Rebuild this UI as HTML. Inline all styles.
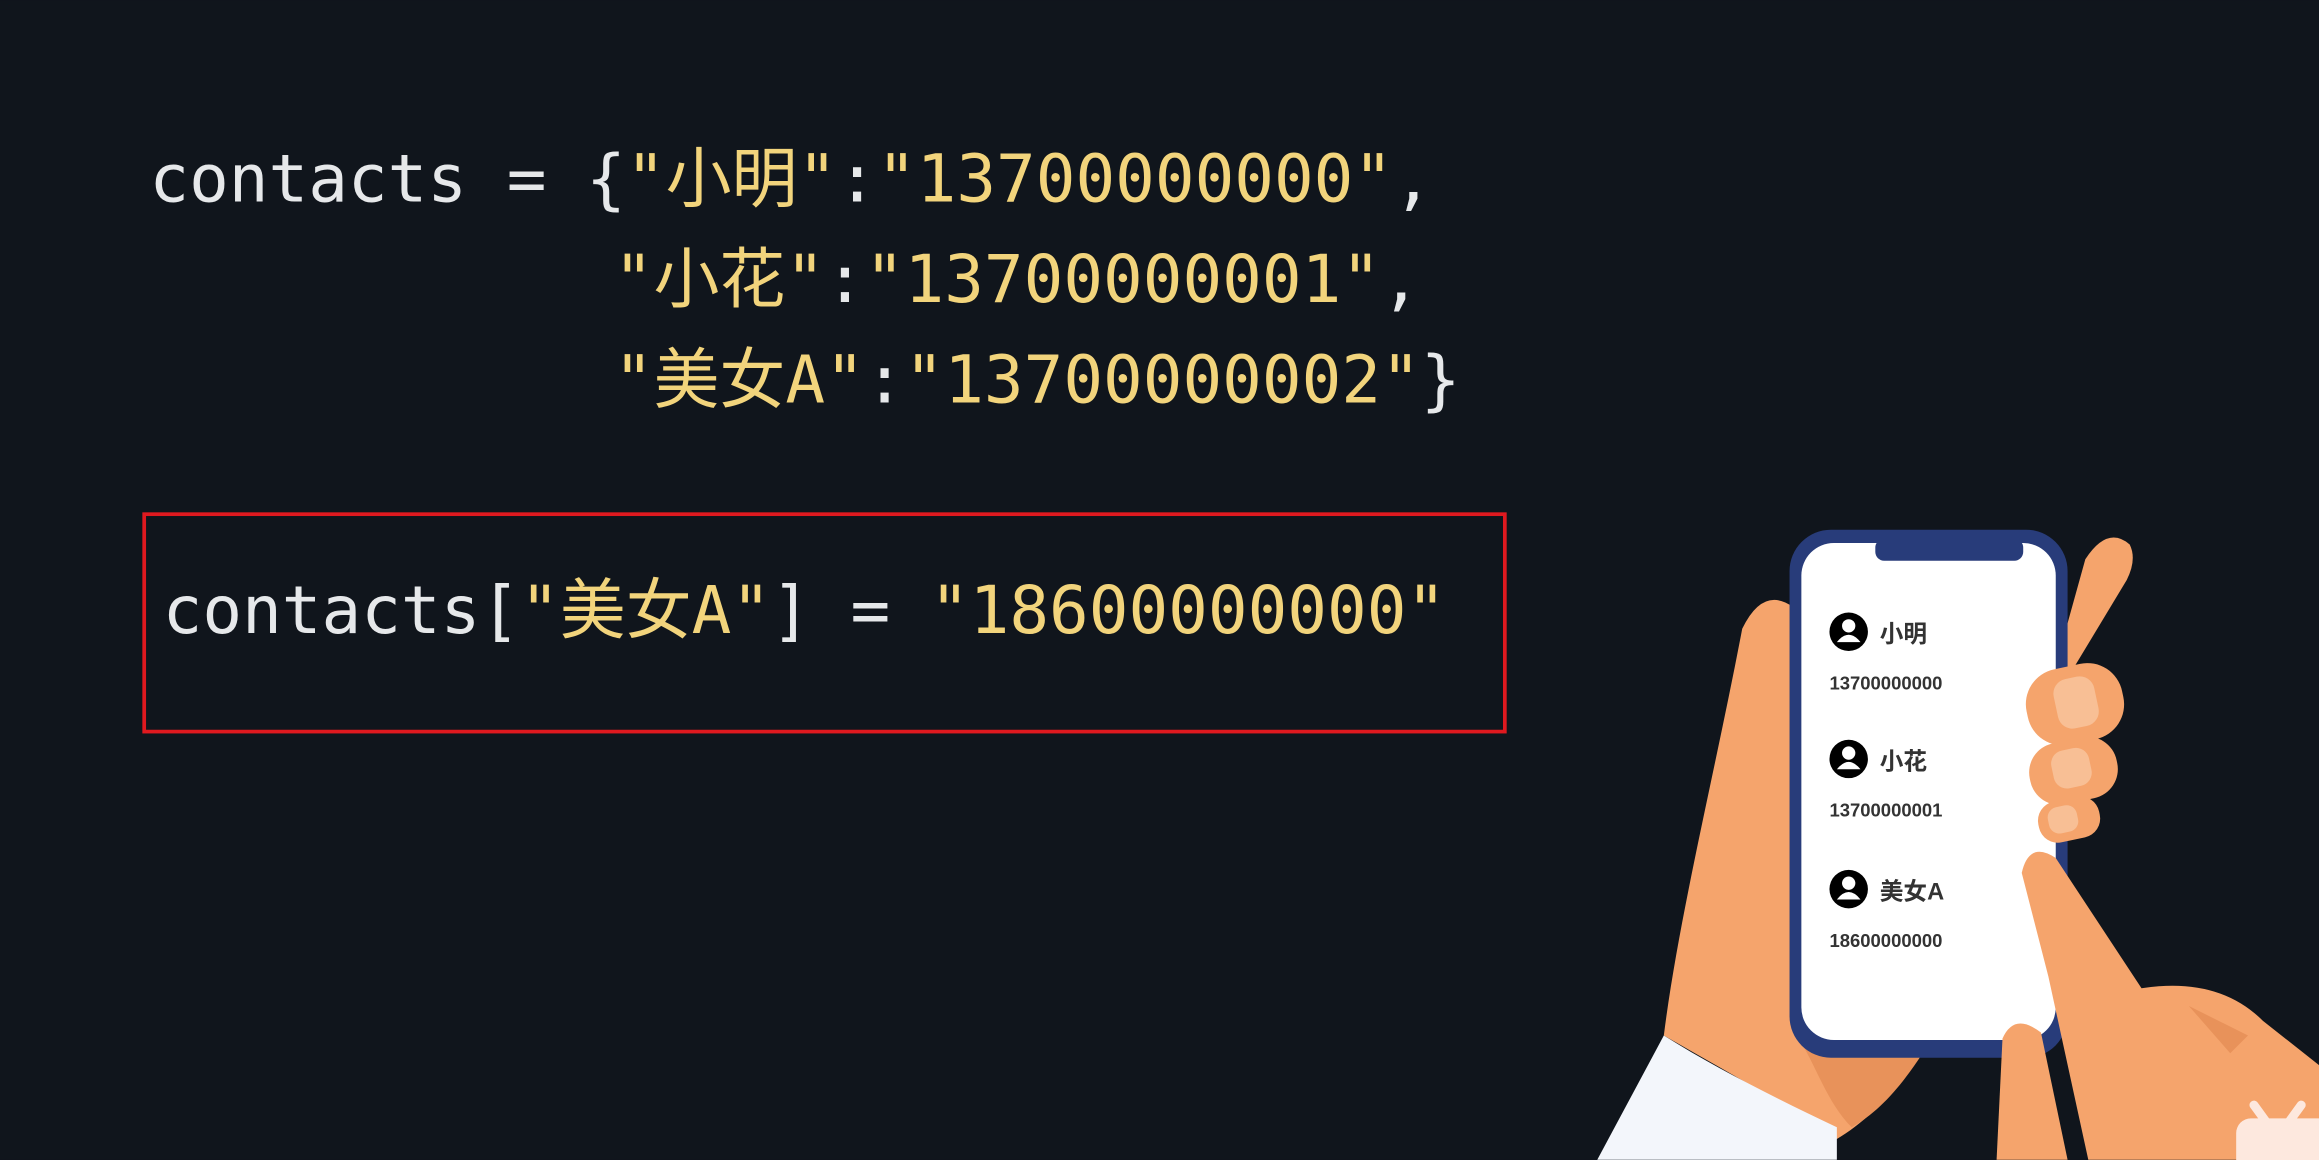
<!DOCTYPE html>
<html><head><meta charset="utf-8"><style>
html,body{margin:0;padding:0;background:#10151c;overflow:hidden}
svg{display:block}
.c{font-family:"DejaVu Sans Mono","Noto Sans CJK SC",monospace;font-size:44.6px}
.w{fill:#e6e8ea}.y{fill:#f2d47c}
.p{font-family:"Liberation Sans","Noto Sans CJK SC",sans-serif;font-weight:bold;fill:#333}
</style></head><body>
<svg width="2319" height="1160" viewBox="0 0 1568 784" xmlns="http://www.w3.org/2000/svg">
<rect width="1568" height="784" fill="#10151c"/>
<text class="c" x="101" y="136" xml:space="preserve"><tspan class="w">contacts = {</tspan><tspan class="y">"小明"</tspan><tspan class="w">:</tspan><tspan class="y">"13700000000"</tspan><tspan class="w">,</tspan></text>
<text class="c" x="415" y="204" xml:space="preserve"><tspan class="y">"小花"</tspan><tspan class="w">:</tspan><tspan class="y">"13700000001"</tspan><tspan class="w">,</tspan></text>
<text class="c" x="415" y="272" xml:space="preserve"><tspan class="y">"美女A"</tspan><tspan class="w">:</tspan><tspan class="y">"13700000002"</tspan><tspan class="w">}</tspan></text>
<rect x="97.5" y="347.5" width="920" height="147" fill="none" stroke="#e0191f" stroke-width="2.5"/>
<text class="c" x="110" y="428" xml:space="preserve"><tspan class="w">contacts[</tspan><tspan class="y">"美女A"</tspan><tspan class="w">] = </tspan><tspan class="y">"18600000000"</tspan></text>

<!-- left hand -->
<path d="M1125,700 C1135,620 1160,520 1178,425 Q1192,396 1212,410 L1215,700 L1300,712 C1280,740 1262,758 1242,770 C1200,742 1160,720 1125,700Z" fill="#f5a46c"/>
<path d="M1215,700 L1300,712 C1285,735 1270,752 1252,762 C1235,745 1228,720 1215,700Z" fill="#e8925a"/>
<path d="M1080,784 L1125,700 C1160,722 1200,742 1242,762 L1242,784Z" fill="#f3f6fb"/>
<!-- top right finger -->
<path d="M1390,450 L1410,378 Q1425,355 1440,368 Q1445,378 1438,392 L1400,455Z" fill="#f5a46c"/>
<!-- phone -->
<rect x="1210" y="358" width="188" height="357" rx="28" fill="#283c7a"/>
<rect x="1218" y="367" width="172" height="336" rx="22" fill="#fff"/>
<rect x="1268" y="364" width="100" height="15" rx="6" fill="#283c7a"/>
<!-- knuckles -->
<rect x="1370" y="450" width="66" height="52" rx="24" fill="#f5a46c" transform="rotate(-12 1403 476)"/>
<rect x="1390" y="458" width="28" height="34" rx="10" fill="#f8bf95" transform="rotate(-12 1403 476)"/>
<rect x="1372" y="500" width="60" height="42" rx="20" fill="#f5a46c" transform="rotate(-12 1402 521)"/>
<rect x="1388" y="506" width="26" height="26" rx="9" fill="#f8bf95" transform="rotate(-12 1402 521)"/>
<rect x="1378" y="540" width="42" height="28" rx="13" fill="#f5a46c" transform="rotate(-12 1399 554)"/>
<rect x="1385" y="544" width="20" height="18" rx="7" fill="#f8bf95" transform="rotate(-12 1399 554)"/>
<!-- right hand -->
<path d="M1367,590 Q1372,568 1390,580 L1448,668 Q1500,660 1530,690 L1568,720 L1568,784 L1412,784 L1385,660Z" fill="#f5a46c"/>
<path d="M1480,680 L1520,700 L1508,712Z" fill="#e8925a"/>
<path d="M1354,702 Q1362,684 1380,698 L1398,784 L1350,784Z" fill="#f5a46c"/>
<!-- phone contents -->
<g>
<circle cx="1250" cy="427" r="13" fill="#000"/><circle cx="1250" cy="423" r="4.5" fill="#fff"/><path d="M1242,434 Q1250,424 1258,434Z" fill="#fff"/>
<text class="p" x="1271" y="434" font-size="16">小明</text>
<text class="p" x="1237" y="466" font-size="12.5">13700000000</text>
<circle cx="1250" cy="513" r="13" fill="#000"/><circle cx="1250" cy="509" r="4.5" fill="#fff"/><path d="M1242,520 Q1250,510 1258,520Z" fill="#fff"/>
<text class="p" x="1271" y="520" font-size="16">小花</text>
<text class="p" x="1237" y="552" font-size="12.5">13700000001</text>
<circle cx="1250" cy="601" r="13" fill="#000"/><circle cx="1250" cy="597" r="4.5" fill="#fff"/><path d="M1242,608 Q1250,598 1258,608Z" fill="#fff"/>
<text class="p" x="1271" y="608" font-size="16">美女A</text>
<text class="p" x="1237" y="640" font-size="12.5">18600000000</text>
</g>
<!-- bili icon -->
<path d="M1524,747 L1532,758 M1556,747 L1548,758" stroke="#fde8de" stroke-width="6" stroke-linecap="round"/>
<rect x="1512" y="756" width="70" height="50" rx="10" fill="#fde8de"/>
</svg>
</body></html>
